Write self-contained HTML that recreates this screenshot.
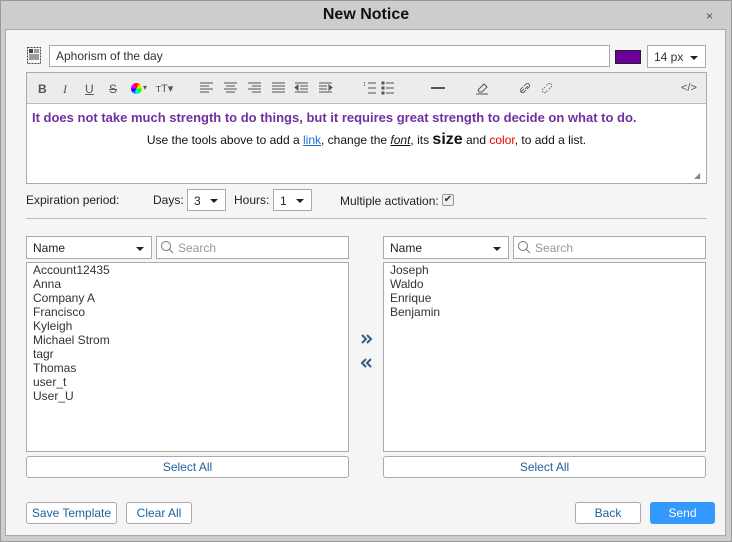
<!DOCTYPE html>
<html><head><style>
*{box-sizing:border-box;margin:0;padding:0}
body{width:732px;height:542px;background:#ccc;font-family:"Liberation Sans",Arial,sans-serif;font-size:12px;color:#222;position:relative;overflow:hidden}
.a{position:absolute}
.frame{left:0;top:0;width:732px;height:542px;border:1px solid #999;background:#cdcdcd}
.panel{left:5px;top:29px;width:721px;height:507px;background:#f5f5f5;border:1px solid #aaa}
.box{background:#fff;border:1px solid #aaa}
.btn{background:#fff;border:1px solid #aaa;border-radius:3px;color:#1f5f9f;text-align:center;line-height:20px}
.caret{position:absolute;right:7px;top:9px;width:0;height:0;border-left:4px solid transparent;border-right:4px solid transparent;border-top:4px solid #222}
.list div{line-height:14px}
.tb{color:#555;font-size:12px}
</style></head><body>
<div class="a frame"></div>
<div class="a" style="left:0;top:6px;width:732px;text-align:center;font-size:16px;font-weight:bold;color:#111">New Notice</div>
<div class="a" style="left:706px;top:9px;font-size:12px;color:#555">×</div>
<div class="a panel"></div>

<svg class="a" style="left:27px;top:47px" width="14" height="17" viewBox="0 0 14 17"><rect x="0.5" y="0.5" width="13" height="16" fill="none" stroke="#444" stroke-dasharray="2 1"/><rect x="2" y="2" width="4" height="4" fill="#444"/><path d="M7 3h5M7 5h5M2 8h10M2 10h10M2 12h10" stroke="#444"/></svg>
<div class="a box" style="left:49px;top:45px;width:561px;height:22px;padding:3px 6px;font-size:12px;color:#333">Aphorism of the day</div>
<div class="a" style="left:615px;top:50px;width:26px;height:14px;background:#6a0099;border:1px solid #222"></div>
<div class="a box" style="left:647px;top:45px;width:59px;height:23px;padding:4px 6px;color:#333">14 px<span class="caret" style="top:10px"></span></div>

<div class="a" style="left:26px;top:72px;width:681px;height:112px;border:1px solid #aaa;background:#fff"></div>
<div class="a" style="left:27px;top:73px;width:679px;height:31px;background:#ececec;border-bottom:1px solid #bbb"></div>
<div class="a tb" style="left:38px;top:82px;font-weight:bold">B</div>
<div class="a tb" style="left:63px;top:82px;font-style:italic;font-family:'Liberation Serif',serif">I</div>
<div class="a tb" style="left:85px;top:82px;text-decoration:underline">U</div>
<div class="a tb" style="left:109px;top:82px;text-decoration:line-through">S</div>
<div class="a" style="left:131px;top:83px;width:11px;height:11px;border-radius:50%;background:conic-gradient(red,yellow,lime,cyan,blue,magenta,red)"></div>
<div class="a tb" style="left:143px;top:83px;font-size:8px">▾</div>
<div class="a tb" style="left:156px;top:82px;font-size:11px">тT▾</div>
<svg class="a" style="left:198px;top:80px" width="140" height="16" viewBox="0 0 140 16" stroke="#555" stroke-width="1">
<path d="M2 3h13M2 6h9M2 9h13M2 12h9"/>
<path d="M26 3h13M28 6h9M26 9h13M28 12h9"/>
<path d="M50 3h13M54 6h9M50 9h13M54 12h9"/>
<path d="M74 3h13M74 6h13M74 9h13M74 12h13"/>
<path d="M97 3h13M102 6h8M102 9h8M97 12h13"/><path d="M100 5l-3 2.5 3 2.5z" fill="#555"/>
<path d="M121 3h13M121 6h8M121 9h8M121 12h13"/><path d="M131 5l3 2.5-3 2.5z" fill="#555"/>
</svg>
<svg class="a" style="left:362px;top:80px" width="40" height="16" viewBox="0 0 40 16" stroke="#555">
<path d="M6 3h8M6 8h8M6 13h8M24 3h8M24 8h8M24 13h8"/>
<path d="M20 2h2v2h-2zM20 7h2v2h-2zM20 12h2v2h-2z" fill="#555"/>
<text x="1" y="6" font-size="5" fill="#555" stroke="none">1</text>
</svg>
<div class="a" style="left:431px;top:87px;width:14px;height:2px;background:#555"></div>
<svg class="a" style="left:475px;top:80px" width="16" height="16" viewBox="0 0 16 16" fill="none" stroke="#555"><path d="M3 10l6-6 3 3-5 5H4z"/><path d="M1 14h12"/></svg>
<svg class="a" style="left:518px;top:80px" width="40" height="16" viewBox="0 0 40 16" fill="none" stroke="#666"><path d="M3 12l3-3M5 7l-2 2a2 2 0 003 3l2-2M9 9l2-2a2 2 0 00-3-3L6 6M7 9l3-3"/><path d="M27 7l-2 2a2 2 0 003 3l2-2M31 9l2-2a2 2 0 00-3-3l-2 2" stroke-dasharray="1.5 1"/></svg>
<div class="a tb" style="left:681px;top:82px;font-size:11px">&lt;/&gt;</div>
<div class="a" style="left:32px;top:110px;font-size:13px;font-weight:bold;color:#7030a0">It does not take much strength to do things, but it requires great strength to decide on what to do.</div>
<div class="a" style="left:27px;top:131px;width:679px;text-align:center;font-size:12px;color:#111">Use the tools above to add a <span style="color:#1a6fd8;text-decoration:underline">link</span>, change the <i style="text-decoration:underline">font</i>, its <b style="font-size:16px">size</b> and <span style="color:#e00">color</span>, to add a list.</div>
<div class="a" style="left:694px;top:171px;font-size:8px;color:#888">◢</div>

<div class="a" style="left:26px;top:193px">Expiration period:</div>
<div class="a" style="left:153px;top:193px">Days:</div>
<div class="a box" style="left:187px;top:189px;width:39px;height:22px;padding:4px 6px">3<span class="caret"></span></div>
<div class="a" style="left:234px;top:193px">Hours:</div>
<div class="a box" style="left:273px;top:189px;width:39px;height:22px;padding:4px 6px">1<span class="caret"></span></div>
<div class="a" style="left:340px;top:194px">Multiple activation:</div>
<div class="a" style="left:442px;top:194px;width:12px;height:12px;border:1px solid #999;border-radius:2px;background:#eee;font-size:10px;line-height:10px;text-align:center;color:#333">✔</div>
<div class="a" style="left:26px;top:218px;width:681px;height:1px;background:#bbb"></div>

<div class="a box" style="left:26px;top:236px;width:126px;height:23px;padding:4px 6px">Name<span class="caret" style="top:10px"></span></div>
<div class="a box" style="left:156px;top:236px;width:193px;height:23px;padding:4px 6px 4px 21px;color:#999">Search</div>
<svg class="a" style="left:160px;top:240px" width="14" height="14" fill="none" stroke="#777"><circle cx="6" cy="6" r="4.5"/><path d="M9 9l4 4"/></svg>
<div class="a box list" style="left:26px;top:262px;width:323px;height:190px;padding:0 6px;color:#333">
<div>Account12435</div><div>Anna</div><div>Company A</div><div>Francisco</div><div>Kyleigh</div><div>Michael Strom</div><div>tagr</div><div>Thomas</div><div>user_t</div><div>User_U</div></div>
<div class="a btn" style="left:26px;top:456px;width:323px;height:22px">Select All</div>

<div class="a box" style="left:383px;top:236px;width:126px;height:23px;padding:4px 6px">Name<span class="caret" style="top:10px"></span></div>
<div class="a box" style="left:513px;top:236px;width:193px;height:23px;padding:4px 6px 4px 21px;color:#999">Search</div>
<svg class="a" style="left:517px;top:240px" width="14" height="14" fill="none" stroke="#777"><circle cx="6" cy="6" r="4.5"/><path d="M9 9l4 4"/></svg>
<div class="a box list" style="left:383px;top:262px;width:323px;height:190px;padding:0 6px;color:#333">
<div>Joseph</div><div>Waldo</div><div>Enrique</div><div>Benjamin</div></div>
<div class="a btn" style="left:383px;top:456px;width:323px;height:22px">Select All</div>

<svg class="a" style="left:359px;top:333px" width="16" height="40" fill="none" stroke="#3d5a80" stroke-width="2"><path d="M3 2l4 4-4 4M8 2l4 4-4 4"/><path d="M7 26l-4 4 4 4M12 26l-4 4 4 4"/></svg>

<div class="a btn" style="left:26px;top:502px;width:91px;height:22px">Save Template</div>
<div class="a btn" style="left:126px;top:502px;width:66px;height:22px">Clear All</div>
<div class="a btn" style="left:575px;top:502px;width:66px;height:22px">Back</div>
<div class="a btn" style="left:650px;top:502px;width:65px;height:22px;background:#3399ff;border-color:#3399ff;color:#fff">Send</div>
</body></html>
